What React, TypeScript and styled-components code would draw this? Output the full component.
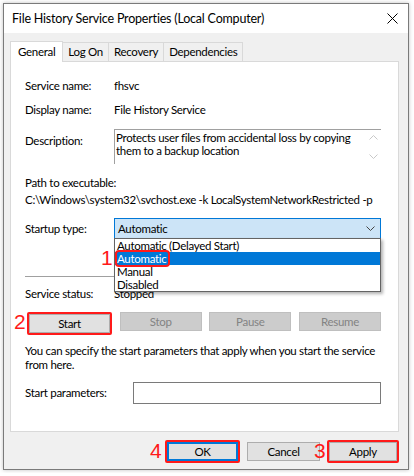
import React from 'react'
import styled, { createGlobalStyle, css } from 'styled-components'

const GlobalStyle = createGlobalStyle`
    html, body {
        margin: 0;
        padding: 0;
        background: #ffffff;
    }
    body {
        font-family: Lato, "Liberation Sans", sans-serif;
        font-size: 11.5px;
        letter-spacing: -0.3px;
        line-height: 14px;
        color: #000;
    }
`

const RED = '#ff1a1a'

const WINDOW = styled.div`
    margin: 3px;
    width: 406px;
    height: 467px;
    box-sizing: border-box;
    border: 1px solid #7a7a7a;
    box-shadow: 0 0 4px rgba(0,0,0,0.25);
    display: flex;
    flex-direction: column;
    background: #f0f0f0;
`

const TITLEBAR = styled.div`
    height: 29px;
    background: #ffffff;
    display: flex;
    align-items: center;
    justify-content: space-between;
    padding: 0 10px 0 8px;
    font-size: 12.5px;
    letter-spacing: -0.2px;
`

const BODY = styled.div`
    flex: 1;
    display: flex;
    flex-direction: column;
    padding: 8px 9px 0 6px;
`

const TABSTRIP = styled.div`
    display: flex;
    align-items: flex-end;
    height: 20px;
    position: relative;
    z-index: 1;
`

const TAB = styled.div<{active?: boolean}>`
    height: 18px;
    line-height: 18px;
    padding: 0 5px;
    border: 1px solid #d9d9d9;
    border-bottom: none;
    margin-left: -1px;
    background: #f0f0f0;
    ${props => props.active && css`
        height: 20px;
        line-height: 19px;
        background: #ffffff;
        margin-left: 0;
        margin-bottom: -1px;
        padding: 0 7px;
    `}
`

const PANEL = styled.div`
    height: 371px;
    box-sizing: border-box;
    background: #ffffff;
    border: 1px solid #d9d9d9;
    padding: 16px 17px 0 14px;
    position: relative;
    display: flex;
    flex-direction: column;
`

const ROW = styled.div<{gap?: number; top?: boolean}>`
    display: flex;
    align-items: ${props => props.top ? 'flex-start' : 'center'};
    margin-top: ${props => props.gap ?? 0}px;
    min-height: 16px;
    white-space: nowrap;
`

const LABEL = styled.div<{width?: number; offset?: number}>`
    width: ${props => props.width ?? 89}px;
    padding-top: ${props => props.offset ?? 0}px;
    flex-shrink: 0;
`

const TEXTBOX = styled.div`
    flex: 1;
    height: 35px;
    box-sizing: border-box;
    border-top: 1px solid #a0a0a0;
    border-left: 1px solid #a0a0a0;
    display: flex;
    line-height: 13px;
    padding: 1px 0 0 1px;
    white-space: normal;
`

const TEXTBOXCONTENT = styled.div`
    flex: 1;
`

const SCROLLCOL = styled.div`
    width: 15px;
    display: flex;
    flex-direction: column;
    justify-content: space-between;
    align-items: center;
    padding: 4px 0 5px;
`

const SELECT = styled.div`
    flex: 1;
    height: 21px;
    box-sizing: border-box;
    background: #cce4f7;
    border: 1px solid #0078d7;
    display: flex;
    align-items: center;
    justify-content: space-between;
    padding: 0 5px 0 3px;
    position: relative;
`

const DROPLIST = styled.div`
    position: absolute;
    left: -1px;
    right: -1px;
    top: 19px;
    background: #ffffff;
    border: 1px solid #646464;
    box-shadow: 2px 2px 3px rgba(0,0,0,0.3);
    z-index: 2;
`

const OPTION = styled.div<{selected?: boolean}>`
    height: 13px;
    line-height: 13px;
    padding: 0 2px;
    ${props => props.selected && css`
        background: #0078d7;
        color: #ffffff;
    `}
`

const MARK = styled.span`
    position: relative;
    display: inline-block;
    padding-right: 2px;
    outline: 2px solid ${RED};
    outline-offset: 0px;
    border-radius: 2px;
`

const NUMBER = styled.span`
    position: absolute;
    font-family: "Liberation Sans", sans-serif;
    letter-spacing: 0;
    color: ${RED};
    font-size: 21px;
    line-height: 22px;
`

const SEPARATOR = styled.div`
    height: 1px;
    background: #a0a0a0;
    margin-top: 37px;
`

const BUTTONROW = styled.div`
    display: flex;
    justify-content: space-between;
    margin-top: 10px;
    padding-left: 2px;
`

const BUTTON = styled.div<{disabled?: boolean; primary?: boolean; width?: number}>`
    width: ${props => props.width ?? 82}px;
    height: 19px;
    box-sizing: border-box;
    display: flex;
    align-items: center;
    justify-content: center;
    background: #e1e1e1;
    border: 1px solid #adadad;
    ${props => props.disabled && css`
        background: #cccccc;
        border-color: #bfbfbf;
        color: #838383;
    `}
    ${props => props.primary && css`
        border: 2px solid #0078d7;
    `}
`

const REDBOX = styled.div`
    position: relative;
    border: 2px solid ${RED};
    border-radius: 2px;
    display: flex;
`

const NOTE = styled.div`
    margin-top: 9px;
    line-height: 14px;
    padding-right: 4px;
`

const INPUT = styled.div`
    flex: 1;
    height: 22px;
    box-sizing: border-box;
    border: 1px solid #7a7a7a;
`

const FOOTER = styled.div`
    display: flex;
    justify-content: flex-end;
    align-items: center;
    gap: 7px;
    padding: 8px 0 0;
`

const CloseIcon = () => (
    <svg width="11" height="11" viewBox="0 0 11 11">
        <path d="M0.5 0.5 L10.5 10.5 M10.5 0.5 L0.5 10.5" stroke="#000" strokeWidth="1" fill="none"/>
    </svg>
)

const Chevron = ({ color = '#444', up = false }: { color?: string; up?: boolean }) => (
    <svg width="9" height="5" viewBox="0 0 9 5">
        <path d={up ? 'M0.5 4.5 L4.5 0.5 L8.5 4.5' : 'M0.5 0.5 L4.5 4.5 L8.5 0.5'} stroke={color} strokeWidth="1" fill="none"/>
    </svg>
)

export default function App() {
    return (
        <>
            <GlobalStyle />
            <WINDOW>
                <TITLEBAR>
                    <span>File History Service Properties (Local Computer)</span>
                    <CloseIcon />
                </TITLEBAR>
                <BODY>
                    <TABSTRIP>
                        <TAB active>General</TAB>
                        <TAB>Log On</TAB>
                        <TAB>Recovery</TAB>
                        <TAB>Dependencies</TAB>
                    </TABSTRIP>
                    <PANEL>
                        <ROW>
                            <LABEL>Service name:</LABEL>
                            <span>fhsvc</span>
                        </ROW>
                        <ROW gap={8}>
                            <LABEL>Display name:</LABEL>
                            <span>File History Service</span>
                        </ROW>
                        <ROW gap={11} top>
                            <LABEL offset={5}>Description:</LABEL>
                            <TEXTBOX>
                                <TEXTBOXCONTENT>
                                    Protects user files from accidental loss by copying them to a backup location
                                </TEXTBOXCONTENT>
                                <SCROLLCOL>
                                    <Chevron up color="#c8c8c8" />
                                    <Chevron color="#c8c8c8" />
                                </SCROLLCOL>
                            </TEXTBOX>
                        </ROW>
                        <ROW gap={11}>Path to executable:</ROW>
                        <ROW gap={1}>C:\Windows\system32\svchost.exe -k LocalSystemNetworkRestricted -p</ROW>
                        <ROW gap={10}>
                            <LABEL>Startup type:</LABEL>
                            <SELECT>
                                <span>Automatic</span>
                                <Chevron />
                                <DROPLIST>
                                    <OPTION>Automatic (Delayed Start)</OPTION>
                                    <OPTION selected>
                                        <MARK>
                                            Automatic
                                            <NUMBER style={{ left: -16, top: -5 }}>1</NUMBER>
                                        </MARK>
                                    </OPTION>
                                    <OPTION>Manual</OPTION>
                                    <OPTION>Disabled</OPTION>
                                </DROPLIST>
                            </SELECT>
                        </ROW>
                        <SEPARATOR />
                        <ROW gap={9}>
                            <LABEL>Service status:</LABEL>
                            <span>Stopped</span>
                        </ROW>
                        <BUTTONROW>
                            <REDBOX>
                                <NUMBER style={{ left: -15, top: -3 }}>2</NUMBER>
                                <BUTTON width={81}>Start</BUTTON>
                            </REDBOX>
                            <BUTTON disabled>Stop</BUTTON>
                            <BUTTON disabled>Pause</BUTTON>
                            <BUTTON disabled>Resume</BUTTON>
                        </BUTTONROW>
                        <NOTE>
                            You can specify the start parameters that apply when you start the service from here.
                        </NOTE>
                        <ROW gap={10}>
                            <LABEL width={108}>Start parameters:</LABEL>
                            <INPUT />
                        </ROW>
                    </PANEL>
                    <FOOTER>
                        <REDBOX>
                            <NUMBER style={{ left: -17, top: -2 }}>4</NUMBER>
                            <BUTTON primary width={71}>OK</BUTTON>
                        </REDBOX>
                        <BUTTON width={73}>Cancel</BUTTON>
                        <REDBOX>
                            <NUMBER style={{ left: -15, top: -2 }}>3</NUMBER>
                            <BUTTON width={68}>Apply</BUTTON>
                        </REDBOX>
                    </FOOTER>
                </BODY>
            </WINDOW>
        </>
    )
}
